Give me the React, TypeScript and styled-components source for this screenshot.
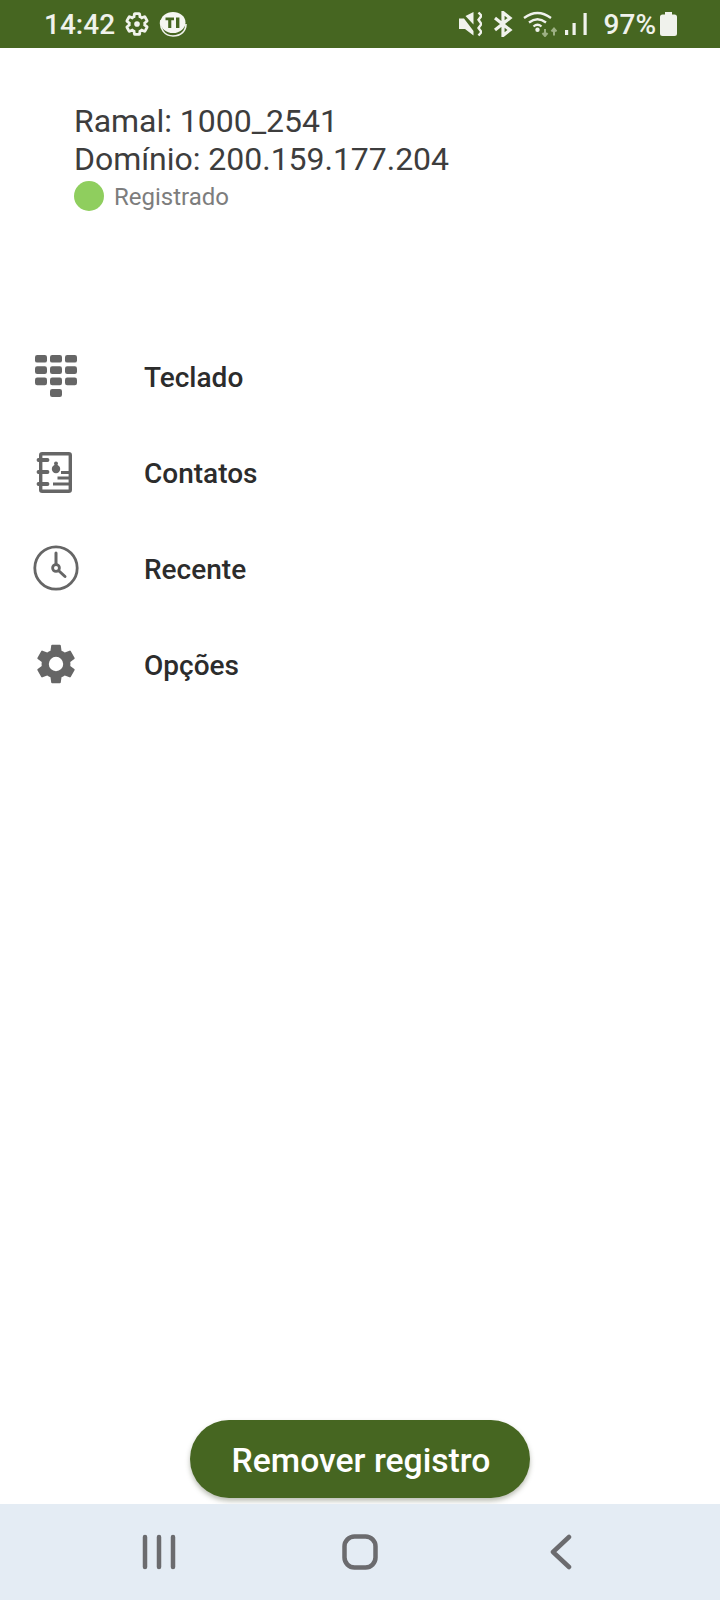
import React from "react";
import styled, { createGlobalStyle } from "styled-components";

const Global = createGlobalStyle`
  html, body { margin: 0; padding: 0; background: #fff; }
  * { box-sizing: border-box; }
`;

const Page = styled.div`
  width: 720px;
  height: 1600px;
  display: flex;
  flex-direction: column;
  font-family: Roboto, "Liberation Sans", sans-serif;
  background: #fff;
  overflow: hidden;
`;

const StatusBar = styled.header`
  height: 48px;
  flex: none;
  background: #466621;
  color: #f0f2ec;
  display: flex;
  align-items: center;
  padding: 0 43px 0 44px;
`;

const StatusGroup = styled.div`
  display: flex;
  align-items: center;
`;

const StatusRight = styled(StatusGroup)`
  margin-left: auto;
`;

const Clock = styled.span`
  font-size: 28px;
  font-weight: 500;
  margin-right: 9px;
`;

const Percent = styled.span`
  font-size: 28px;
  font-weight: 500;
  margin: 0 4px 0 16px;
`;

const Identity = styled.section`
  padding: 54px 0 0 74px;
  height: 281px;
  flex: none;
`;

const InfoLine = styled.div`
  font-size: 32px;
  line-height: 38px;
  color: #3d3d3d;
  letter-spacing: -0.03px;
`;

const StateRow = styled.div`
  display: flex;
  align-items: center;
  gap: 10px;
  height: 36px;
`;

const StateDot = styled.span`
  width: 30px;
  height: 30px;
  border-radius: 50%;
  background: #8fce5e;
`;

const StateLabel = styled.span`
  font-size: 24px;
  color: #7d7d7d;
  padding-top: 2px;
`;

const Menu = styled.nav`
  display: flex;
  flex-direction: column;
  flex: 1;
`;

const MenuItem = styled.div`
  height: 96px;
  display: flex;
  align-items: center;
`;

const IconSlot = styled.div`
  width: 144px;
  padding: 0 0 2px 32px;
  display: flex;
  align-items: center;
`;

const MenuLabel = styled.span`
  font-size: 28px;
  font-weight: 500;
  color: #2c2c2c;
`;

const ActionRow = styled.div`
  display: flex;
  justify-content: center;
  padding-bottom: 6px;
  flex: none;
`;

const RemoveButton = styled.button`
  width: 340px;
  height: 78px;
  border: none;
  border-radius: 39px;
  background: #466621;
  color: #fff;
  font-family: inherit;
  font-size: 33.7px;
  font-weight: 500;
  padding: 2px 0 0 2px;
  box-shadow: 0 3px 5px rgba(60, 70, 40, 0.35);
`;

const NavBar = styled.footer`
  height: 96px;
  flex: none;
  background: #e4ecf4;
  display: grid;
  grid-template-columns: 201px 208px auto;
  align-items: center;
  padding-left: 141px;
  color: #6b6b6e;
`;

const Dialpad = () => (
  <svg width="48" height="48" viewBox="0 0 48 48" fill="#666">
    {[0, 1, 2].flatMap((r) =>
      [0, 1, 2].map((c) => <rect key={`${r}${c}`} x={3 + c * 15} y={3 + r * 11.3} width="12" height="7.6" rx="2.2" />)
    )}
    <rect x="18" y="37" width="12" height="8" rx="2.2" />
  </svg>
);

const Contacts = () => (
  <svg width="48" height="48" viewBox="0 0 48 48" fill="none">
    <rect x="8.7" y="5.7" width="29.6" height="37.6" rx="1.5" stroke="#666" strokeWidth="3.4" />
    <path d="M6.500 12h9M6.500 24h9M6.500 36h9" stroke="#666" strokeWidth="3.8" strokeLinecap="round" />
    <circle cx="24" cy="21" r="4.200" fill="#666" />
    <circle cx="24" cy="15.500" r="2" fill="#666" />
    <path d="M29 24.500h8M25.500 30h12M21 36h16" stroke="#666" strokeWidth="3" />
  </svg>
);

const ClockIcon = () => (
  <svg width="48" height="48" viewBox="0 0 48 48" fill="none" stroke="#666">
    <circle cx="24" cy="24" r="21.2" strokeWidth="2.8" />
    <path d="M24 9v11M27 27l6 5.500" strokeWidth="3" strokeLinecap="round" />
    <circle cx="24" cy="24" r="3.400" strokeWidth="2.800" />
  </svg>
);

const Gear = () => (
  <svg width="48" height="48" viewBox="0 0 24 24" fill="#666">
    <path d="M19.14 12.94c.04-.3.06-.61.06-.94 0-.32-.02-.64-.07-.94l2.03-1.58a.49.49 0 0 0 .12-.61l-1.92-3.32a.49.49 0 0 0-.59-.22l-2.39.96c-.5-.38-1.03-.7-1.62-.94l-.36-2.54a.48.48 0 0 0-.48-.41h-3.84a.47.47 0 0 0-.47.41l-.36 2.54c-.59.24-1.13.57-1.62.94l-2.39-.96a.48.48 0 0 0-.59.22L2.74 8.87a.47.47 0 0 0 .12.61l2.03 1.58c-.05.3-.09.63-.09.94s.02.64.07.94l-2.03 1.58a.49.49 0 0 0-.12.61l1.92 3.32c.12.22.37.29.59.22l2.39-.96c.5.38 1.03.7 1.62.94l.36 2.54c.05.24.24.41.48.41h3.84c.24 0 .44-.17.47-.41l.36-2.54c.59-.24 1.13-.56 1.62-.94l2.39.96c.22.08.47 0 .59-.22l1.92-3.32a.47.47 0 0 0-.12-.61l-2.01-1.58zM12 15.6A3.6 3.6 0 1 1 12 8.4a3.6 3.6 0 0 1 0 7.2z" />
  </svg>
);

const GearOutline = () => (
  <svg width="26" height="26" viewBox="0 0 24 24" fill="none" stroke="#f0f2ec" strokeWidth="2.6">
    <path d="M19.14 12.94c.04-.3.06-.61.06-.94 0-.32-.02-.64-.07-.94l2.03-1.58a.49.49 0 0 0 .12-.61l-1.92-3.32a.49.49 0 0 0-.59-.22l-2.39.96c-.5-.38-1.03-.7-1.62-.94l-.36-2.54a.48.48 0 0 0-.48-.41h-3.84a.47.47 0 0 0-.47.41l-.36 2.54c-.59.24-1.13.57-1.62.94l-2.39-.96a.48.48 0 0 0-.59.22L2.74 8.87a.47.47 0 0 0 .12.61l2.03 1.58c-.05.3-.09.63-.09.94s.02.64.07.94l-2.03 1.58a.49.49 0 0 0-.12.61l1.92 3.32c.12.22.37.29.59.22l2.39-.96c.5.38 1.03.7 1.62.94l.36 2.54c.05.24.24.41.48.41h3.84c.24 0 .44-.17.47-.41l.36-2.54c.59-.24 1.13-.56 1.62-.94l2.39.96c.22.08.47 0 .59-.22l1.92-3.32a.47.47 0 0 0-.12-.61l-2.01-1.58z" />
    <circle cx="12" cy="12" r="2.6" fill="#f0f2ec" stroke="none" />
  </svg>
);

const TiLogo = () => (
  <svg width="28" height="26" viewBox="0 0 28 26" style={{ marginLeft: 9 }}>
    <path d="M2 9C0 18 6 25 14 25s13-5 13-12" fill="none" stroke="#f0f2ec" strokeWidth="1.6" />
    <ellipse cx="14" cy="11.500" rx="12.500" ry="10.500" fill="#f5f6f2" />
    <path d="M6.500 6.500H15v2.800h-2.700V17H9.200V9.300H6.500zM17 6.500h3.400V17H17z" fill="#466621" />
  </svg>
);

const Mute = () => (
  <svg width="26" height="26" viewBox="0 0 26 26" fill="#f0f2ec" style={{ marginRight: -1 }}>
    <path d="M3 7.500h5l9.500 12.500v4.500L9 18H3z" />
    <path d="M9.500 5L17.500 1v12.500z" />
    <path d="M22.500 1.500l3 3.300-3 4 3 4.200-3 4 3 4-3 3.500" fill="none" stroke="#f0f2ec" strokeWidth="2.400" />
  </svg>
);

const Bluetooth = () => (
  <svg width="20" height="26" viewBox="0 0 20 26" fill="none" stroke="#f0f2ec" strokeWidth="3.200" style={{ marginLeft: 12 }}>
    <path d="M2 7l15 12-7 5.500V1.500L17 7 2 19" />
  </svg>
);

const Wifi = () => (
  <svg width="34" height="26" viewBox="0 0 34 26" fill="none" style={{ marginLeft: 10 }}>
    <path d="M1 7Q14.500-3 28 7M6 11.500Q14.500 5 23 11.500M10.500 15.500Q14.500 12 18.500 15.500" stroke="#f0f2ec" strokeWidth="2.300" />
    <circle cx="14.500" cy="18.800" r="2.200" fill="#f0f2ec" />
    <path d="M22 18v7M19.500 22l2.500 3 2.500-3" stroke="#9db184" strokeWidth="2" />
    <path d="M31 24.500v-7M28.500 20.500l2.500-3 2.500 3" stroke="#9db184" strokeWidth="2" />
  </svg>
);

const Signal = () => (
  <svg width="24" height="26" viewBox="0 0 24 26" fill="#f0f2ec" style={{ marginLeft: 7 }}>
    <rect x="1" y="19" width="3.200" height="5" />
    <rect x="8.500" y="12" width="3.200" height="12" />
    <rect x="19.500" y="2" width="3.200" height="22" />
  </svg>
);

const Battery = () => (
  <svg width="17" height="24" viewBox="0 0 17 24" fill="#f0f2ec">
    <path d="M5 0h7v2.500h2.500A2.500 2.500 0 0 1 17 5v16.500a2.500 2.500 0 0 1-2.500 2.500h-12A2.500 2.500 0 0 1 0 21.500V5a2.500 2.500 0 0 1 2.500-2.500H5z" />
  </svg>
);

const RecentsIcon = () => (
  <svg width="36" height="36" viewBox="0 0 36 36" fill="none" stroke="currentColor" strokeWidth="4.500" strokeLinecap="round">
    <path d="M4 3v30M18 3v30M32 3v30" />
  </svg>
);

const HomeIcon = () => (
  <svg width="36" height="36" viewBox="0 0 36 36" fill="none" stroke="currentColor" strokeWidth="4.500">
    <rect x="2.500" y="2.500" width="31" height="31" rx="10" />
  </svg>
);

const BackIcon = () => (
  <svg width="22" height="36" viewBox="0 0 22 36" fill="none" stroke="currentColor" strokeWidth="4.500" strokeLinecap="round" strokeLinejoin="round">
    <path d="M19 3L3 18l16 15" />
  </svg>
);

const items = [
  { label: "Teclado", icon: <Dialpad /> },
  { label: "Contatos", icon: <Contacts /> },
  { label: "Recente", icon: <ClockIcon /> },
  { label: "Opções", icon: <Gear /> },
];

export default function App() {
  return (
    <Page>
      <Global />
      <StatusBar>
        <StatusGroup>
          <Clock>14:42</Clock>
          <GearOutline />
          <TiLogo />
        </StatusGroup>
        <StatusRight>
          <Mute />
          <Bluetooth />
          <Wifi />
          <Signal />
          <Percent>97%</Percent>
          <Battery />
        </StatusRight>
      </StatusBar>
      <Identity>
        <InfoLine>Ramal: 1000_2541</InfoLine>
        <InfoLine>Domínio: 200.159.177.204</InfoLine>
        <StateRow>
          <StateDot />
          <StateLabel>Registrado</StateLabel>
        </StateRow>
      </Identity>
      <Menu>
        {items.map((it) => (
          <MenuItem key={it.label}>
            <IconSlot>{it.icon}</IconSlot>
            <MenuLabel>{it.label}</MenuLabel>
          </MenuItem>
        ))}
      </Menu>
      <ActionRow>
        <RemoveButton>Remover registro</RemoveButton>
      </ActionRow>
      <NavBar>
        <RecentsIcon />
        <HomeIcon />
        <BackIcon />
      </NavBar>
    </Page>
  );
}
